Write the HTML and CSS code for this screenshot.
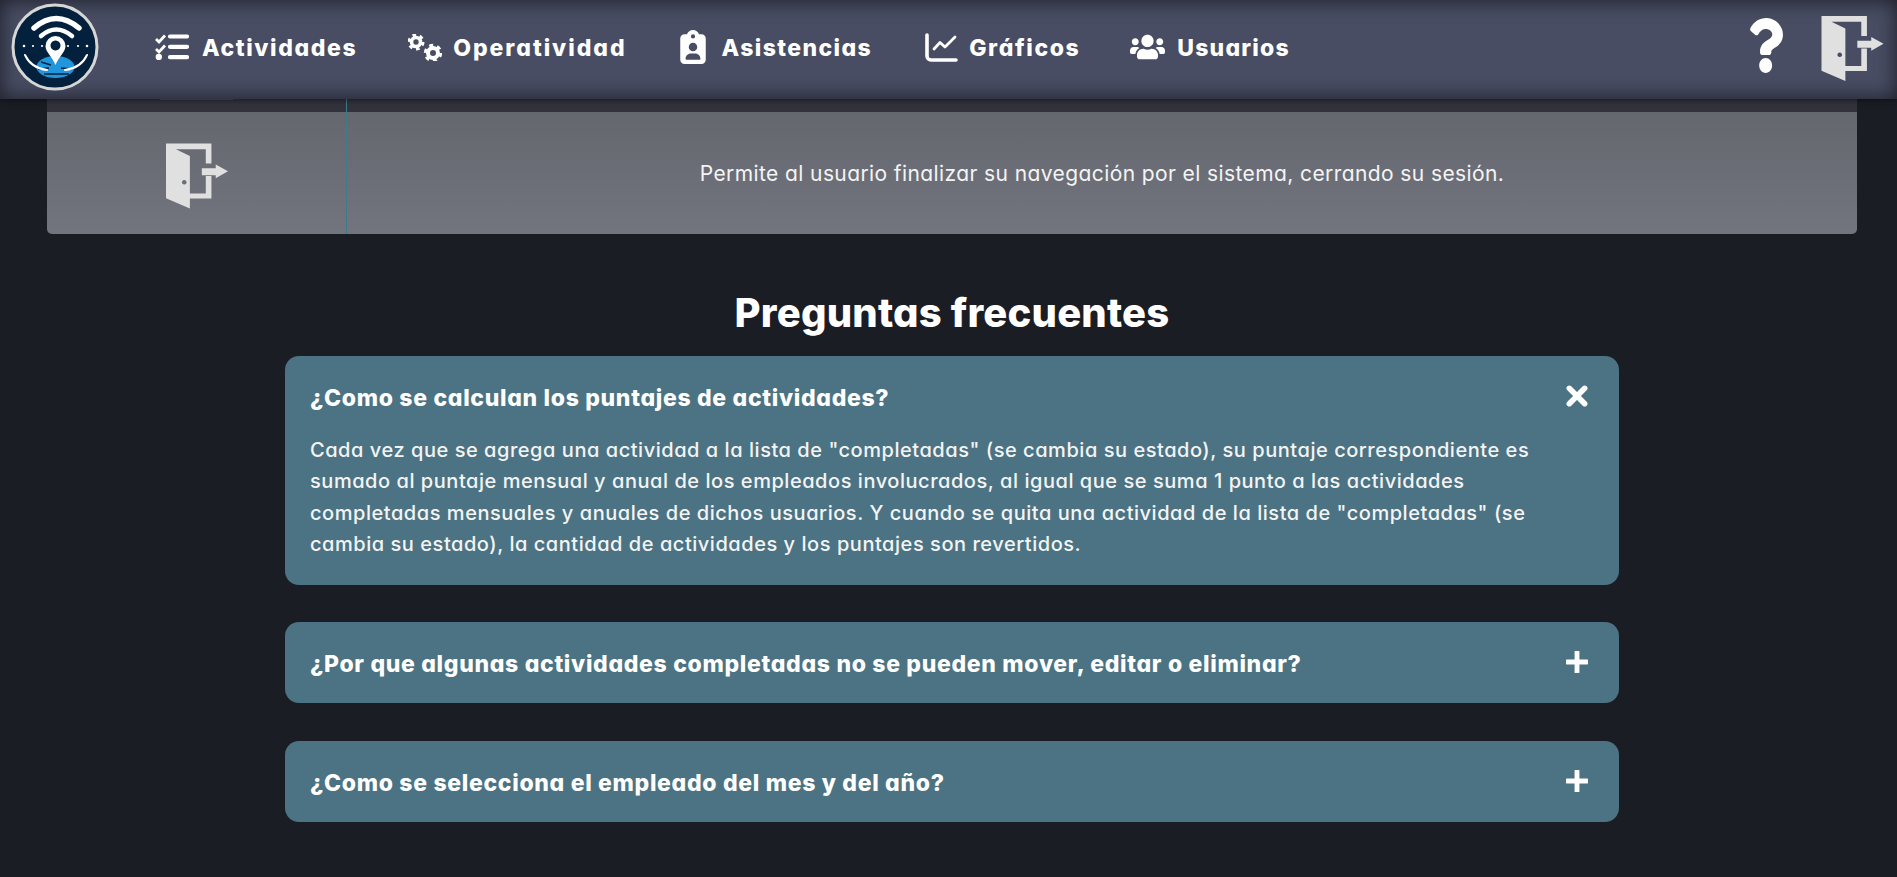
FILE: index.html
```html
<!DOCTYPE html>
<html lang="es">
<head>
<meta charset="utf-8">
<title>Ayuda</title>
<link rel="stylesheet" href="styles.css">
</head>
<body>
<svg class="defs" width="0" height="0" aria-hidden="true">
  <symbol id="door" viewBox="0 0 187 196">
    <path fill-rule="evenodd" d="M0 0H137V60H120V17H30L72 38V151H120V98H137V166H72V196L0 165ZM55 110a7 7 0 1 0 .01 0Z"/>
    <path d="M108 75H150V63L187 84L150 105V96H108Z"/>
  </symbol>
</svg>
<header class="topbar">
  <svg class="logo" viewBox="0 0 88 88" aria-label="Logo">
    <circle cx="44" cy="44" r="42" fill="#03203d" stroke="#d6d6d6" stroke-width="3"/>
    <path d="M23 25Q45 6 68 25" class="wifi" stroke-width="5.500"/>
    <path d="M30 33Q45 20 61 33" class="wifi" stroke-width="4.500"/>
    <ellipse cx="44.500" cy="64" rx="19" ry="11" fill="#2196dc"/>
    <path d="M30 59L40 62M27 66L38 65M50 65L61 66M33 71L58 71" stroke="#03203d" stroke-width="1.400" fill="none"/>
    <path d="M14 52Q20 65 36 67" class="wifi" stroke-width="2"/>
    <path d="M76 52Q70 65 54 67" class="wifi" stroke-width="2"/>
    <path fill="#fff" fill-rule="evenodd" d="M44.500 33a10 10 0 0 1 10 10c0 6-7 11-10 19c-3-8-10-13-10-19a10 10 0 0 1 10-10ZM44.500 37.500a5 5 0 1 0 .01 0Z"/>
    <g fill="#fff"><circle cx="13" cy="43" r="1.300"/><circle cx="22" cy="43" r="1.100"/><circle cx="31" cy="43" r="1.100"/><circle cx="57" cy="43" r="1.100"/><circle cx="67" cy="43" r="1.100"/><circle cx="76" cy="43" r="1.300"/></g>
  </svg>
  <nav class="menu">
    <a class="menu-item">
      <svg class="ic ic-tasks" viewBox="0 0 34 26">
        <path d="M1 5l3 3 6-6.500M1 15l3 3 6-6.500" class="tick"/>
        <path d="M15 2.500H32M15 12.800H32M15 23.200H32" class="bar"/>
        <circle cx="3.800" cy="23" r="3.200" fill="#fff"/>
      </svg>
      <span>Actividades</span>
    </a>
    <a class="menu-item menu-item-oper">
      <svg class="ic ic-cogs" viewBox="0 0 34 27">
        <g class="gear gear-big"><circle cx="8" cy="8" r="4.500"/><circle cx="8" cy="8" r="7" class="teeth"/></g>
        <g class="gear gear-small"><circle cx="25" cy="19" r="5"/><circle cx="25" cy="19" r="7.700" class="teeth"/></g>
      </svg>
      <span>Operatividad</span>
    </a>
    <a class="menu-item menu-item-asis">
      <svg class="ic ic-badge" viewBox="0 0 384 512"><path fill="#fff" d="M192 0c-41.800 0-77.400 26.700-90.500 64H64C28.700 64 0 92.700 0 128V448c0 35.300 28.700 64 64 64H320c35.300 0 64-28.700 64-64V128c0-35.300-28.700-64-64-64H282.500C269.400 26.700 233.800 0 192 0zm0 64a32 32 0 1 1 0 64 32 32 0 1 1 0-64zM128 256a64 64 0 1 1 128 0 64 64 0 1 1 -128 0zM80 432c0-44.200 35.800-80 80-80h64c44.200 0 80 35.800 80 80c0 8.800-7.200 16-16 16H96c-8.800 0-16-7.200-16-16z"/></svg>
      <span>Asistencias</span>
    </a>
    <a class="menu-item menu-item-graf">
      <svg class="ic ic-chart" viewBox="0 0 33 29">
        <path d="M2 2V23a4 4 0 0 0 4 4H31" class="bar thick"/>
        <path d="M9 16L15 9.500L20 14L30 4" class="bar thin"/>
      </svg>
      <span>Gráficos</span>
    </a>
    <a class="menu-item menu-item-user">
      <svg class="ic ic-users" viewBox="0 0 640 512"><path fill="#fff" d="M96 224c35.300 0 64-28.700 64-64s-28.700-64-64-64-64 28.700-64 64 28.700 64 64 64zm448 0c35.300 0 64-28.700 64-64s-28.700-64-64-64-64 28.700-64 64 28.700 64 64 64zm32 32h-64c-17.600 0-33.500 7.100-45.100 18.600 40.300 22.100 68.900 62 75.100 109.400h66c17.700 0 32-14.300 32-32v-32c0-35.300-28.700-64-64-64zm-256 0c61.900 0 112-50.100 112-112S381.900 32 320 32 208 82.100 208 144s50.100 112 112 112zm76.800 32h-8.300c-20.800 10-43.900 16-68.500 16s-47.600-6-68.500-16h-8.300C179.600 288 128 339.600 128 403.200V432c0 26.500 21.500 48 48 48h288c26.500 0 48-21.500 48-48v-28.800c0-63.600-51.600-115.200-115.200-115.200zm-223.700-13.400C161.500 263.100 145.600 256 128 256H64c-35.300 0-64 28.700-64 64v32c0 17.700 14.300 32 32 32h65.900c6.300-47.400 34.900-87.300 75.200-109.400z"/></svg>
      <span>Usuarios</span>
    </a>
  </nav>
  <div class="top-actions">
    <svg class="ic-help" viewBox="24 0 354 512" preserveAspectRatio="none" aria-label="Ayuda"><path fill="#fff" d="M202.021 0C122.202 0 70.503 32.703 29.914 91.026c-7.363 10.580-5.093 25.086 5.178 32.874l43.138 32.709c10.373 7.865 25.132 6.026 33.253-4.148 25.049-31.381 43.630-49.449 82.757-49.449 30.764 0 68.816 19.799 68.816 49.631 0 22.552-18.617 34.134-48.993 51.164-35.423 19.860-82.299 44.576-82.299 106.405V320c0 13.255 10.745 24 24 24h72.471c13.255 0 24-10.745 24-24v-5.773c0-42.860 125.268-44.645 125.268-160.627C377.504 66.256 286.902 0 202.021 0zM192 373.459c-38.196 0-69.271 31.075-69.271 69.271 0 38.195 31.075 69.270 69.271 69.270s69.271-31.075 69.271-69.271-31.075-69.270-69.271-69.270z"/></svg>
    <svg class="ic-door"><use href="#door"/></svg>
  </div>
</header>
<main class="page">
  <div class="table">
    <div class="row-tail">
      <div class="cell-a"><div class="tail-line"></div></div>
      <div class="cell-b"></div>
    </div>
    <div class="row">
      <div class="cell-a cell-icon"><svg class="ic-door-row"><use href="#door"/></svg></div>
      <div class="cell-b cell-text">Permite al usuario finalizar su navegación por el sistema, cerrando su sesión.</div>
    </div>
  </div>
  <section class="faq">
    <h2 class="faq-title">Preguntas frecuentes</h2>
    <article class="card">
      <div class="card-head">
        <h3>¿Como se calculan los puntajes de actividades?</h3>
        <svg class="toggle toggle-close" viewBox="0 0 20 20"><path d="M3 3L17 17M17 3L3 17"/></svg>
      </div>
      <p class="card-body">Cada vez que se agrega una actividad a la lista de "completadas" (se cambia su estado), su puntaje correspondiente es<br>sumado al puntaje mensual y anual de los empleados involucrados, al igual que se suma 1 punto a las actividades<br>completadas mensuales y anuales de dichos usuarios. Y cuando se quita una actividad de la lista de "completadas" (se<br>cambia su estado), la cantidad de actividades y los puntajes son revertidos.</p>
    </article>
    <article class="card">
      <div class="card-head">
        <h3>¿Por que algunas actividades completadas no se pueden mover, editar o eliminar?</h3>
        <svg class="toggle" viewBox="0 0 20 20"><path d="M10 1V19M1 10H19"/></svg>
      </div>
    </article>
    <article class="card">
      <div class="card-head">
        <h3>¿Como se selecciona el empleado del mes y del año?</h3>
        <svg class="toggle" viewBox="0 0 20 20"><path d="M10 1V19M1 10H19"/></svg>
      </div>
    </article>
  </section>
</main>
</body>
</html>
```
FILE: styles.css
```css
* { box-sizing: border-box; }
html, body { height: 100%; }
body {
  margin: 0;
  overflow: hidden;
  background: #1a1d24;
  color: #fff;
  font-family: "Inter", "Noto Sans", sans-serif;
  font-feature-settings: "cv11";
}
.defs { position: absolute; }

.topbar {
  position: relative;
  z-index: 2;
  height: 99px;
  display: flex;
  align-items: center;
  padding: 0 13px 5px 11px;
  background: #484d63;
  box-shadow: inset 0 0 18px 2px rgba(20, 20, 28, .75), 0 1px 6px rgba(0, 0, 0, .5);
}
.logo { width: 88px; height: 88px; flex: none; }
.wifi { fill: none; stroke: #fff; stroke-linecap: round; }
.menu { display: flex; align-items: center; gap: 51px; margin-left: 56px; }
.menu-item {
  display: flex;
  align-items: center;
  gap: 13px;
  font-size: 23px;
  font-weight: 800;
  letter-spacing: 1.6px;
  white-space: nowrap;
}
.menu-item span { padding-top: 2px; }
.menu-item-oper { letter-spacing: 1.950px; gap: 11px; }
.menu-item-asis { gap: 16px; letter-spacing: 1.400px; margin-left: 2px; }
.menu-item-graf { gap: 11px; margin-left: 2px; }
.menu-item-user { gap: 12px; letter-spacing: 1.200px; margin-left: -1px; }
.ic { display: block; flex: none; }
.ic-tasks { width: 34px; height: 26px; }
.ic-cogs { width: 34px; height: 27px; }
.ic-badge { width: 26px; height: 34px; }
.ic-chart { width: 33px; height: 29px; }
.ic-users { width: 35px; height: 28px; }
.tick { fill: none; stroke: #fff; stroke-width: 2.800; }
.bar { fill: none; stroke: #fff; stroke-width: 4.200; stroke-linecap: round; stroke-linejoin: round; }
.bar.thick { stroke-width: 3.600; }
.bar.thin { stroke-width: 2.800; }
.gear circle { fill: none; stroke: #fff; }
.gear-big circle { stroke-width: 3.600; }
.gear-big .teeth { stroke-width: 3; stroke-dasharray: 3.600 3.730; }
.gear-small circle { stroke-width: 4; }
.gear-small .teeth { stroke-width: 3; stroke-dasharray: 4 4.060; }
.top-actions { margin-left: auto; display: flex; align-items: center; gap: 38px; }
.ic-help { width: 33px; height: 55px; margin-bottom: 3px; }
.ic-door { width: 63px; height: 65px; fill: #e0e0e0; margin-top: 3px; }

.page { padding: 0 40px 0 47px; }
.row-tail, .row { display: grid; grid-template-columns: 300px 1fr; }
.row-tail { height: 13px; background: #31323b; }
.row {
  height: 122px;
  background: linear-gradient(#65676f, #72747e);
  border-radius: 0 0 5px 5px;
}
.cell-a { border-right: 1px solid #3f7a8c; }
.tail-line { width: 73px; height: 1px; margin-left: 113px; background: #4c4d55; }
.cell-icon { display: flex; align-items: center; justify-content: center; }
.ic-door-row { width: 62px; height: 66px; fill: #e0e0e0; margin: 6px 0 0 1px; }
.cell-text {
  display: flex;
  align-items: center;
  justify-content: center;
  font-size: 21px;
  font-weight: 400;
  letter-spacing: .4px;
  color: #f4f4f4;
}

.faq { width: 1334px; margin: 0 auto; }
.faq-title {
  margin: 50px 0 0;
  height: 72px;
  line-height: 58px;
  text-align: center;
  font-size: 40px;
  font-weight: 800;
  letter-spacing: .2px;
}
.card {
  background: #4b7383;
  border-radius: 14px;
  padding: 25px 25px 24px;
  margin-bottom: 37.500px;
}
.card-head { display: flex; justify-content: space-between; align-items: center; min-height: 32px; padding-right: 6px; }
.card-head h3 { margin: 0; padding-top: 2px; font-size: 23px; font-weight: 800; line-height: 30px; letter-spacing: .68px; }
.toggle { width: 22px; height: 22px; flex: none; margin-bottom: 2px; }
.toggle path { fill: none; stroke: #fff; stroke-width: 4.400; stroke-linecap: round; }
.toggle-close path { stroke-width: 5; }
.card-body {
  margin: 22px 0 0;
  font-size: 20px;
  font-weight: 500;
  line-height: 31.400px;
  letter-spacing: .54px;
  color: #f4f4f4;
  white-space: nowrap;
}
```
